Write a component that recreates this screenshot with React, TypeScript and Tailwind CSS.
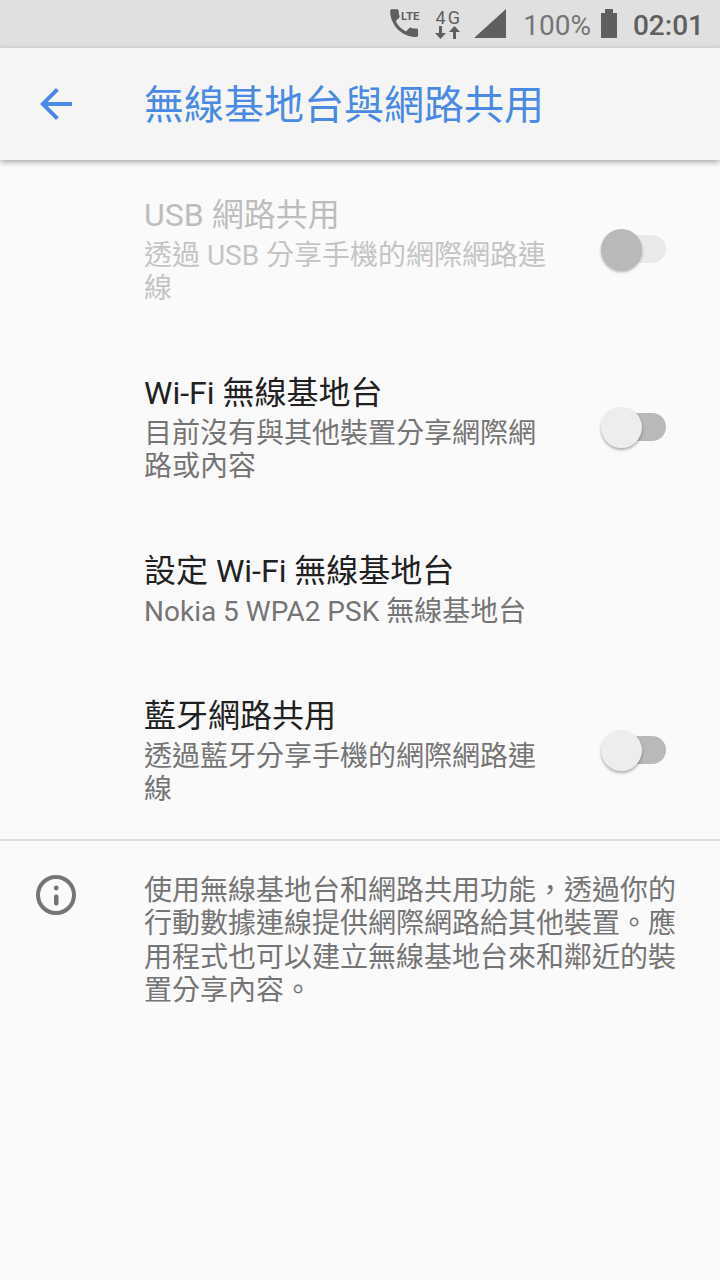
const font = "font-['Roboto','Noto_Sans_CJK_TC',sans-serif]";

const Toggle = ({ disabled }: { disabled?: boolean }) => (
  <div className="relative w-[65px] h-[41px] shrink-0 -mt-[3px]">
    <div className={`absolute right-0 top-[6px] w-[56px] h-[28px] rounded-full ${disabled ? "bg-[#e9e9e9]" : "bg-[#b9b9b9]"}`} />
    <div
      className={`absolute left-0 top-0 w-[41px] h-[41px] rounded-full shadow-[0_2px_3px_rgba(0,0,0,0.3)] ${disabled ? "bg-[#b9b9b9]" : "bg-[#ededed]"}`}
    />
  </div>
);

const Row = ({
  title,
  summary,
  toggle,
  disabled,
}: {
  title: string;
  summary: string;
  toggle?: boolean;
  disabled?: boolean;
}) => (
  <div className="flex items-center pl-[144px] pr-[54px] pt-[36px] pb-[33px]">
    <div className="flex-1 min-w-0 pr-[48px]">
      <div className={`text-[32px] leading-[38px] ${disabled ? "text-[#bdbdbd]" : "text-[#212121]"}`}>{title}</div>
      <div className={`text-[28px] leading-[33px] mt-[5px] ${disabled ? "text-[#c4c4c4]" : "text-[#757575]"}`}>{summary}</div>
    </div>
    {toggle && <Toggle disabled={disabled} />}
  </div>
);

const StatusBar = () => (
  <div className="h-[48px] bg-[#e0e0e0] flex items-center justify-end pr-[16px] text-[#616161]">
    <svg width="32" height="32" viewBox="0 0 32 32" className="mr-[15px] mt-[-2px]">
      <g transform="translate(-2.500 -2.500) scale(1.550)">
        <path
          d="M6.620 10.790c1.440 2.830 3.760 5.140 6.590 6.590l2.200-2.200c.27-.27.67-.36 1.020-.24 1.120.37 2.330.57 3.570.57.55 0 1 .45 1 1V20c0 .55-.45 1-1 1-9.390 0-17-7.610-17-17 0-.55.45-1 1-1h3.500c.55 0 1 .45 1 1 0 1.250.2 2.450.57 3.570.11.35.03.74-.25 1.020l-2.200 2.200z"
          fill="#5f5f5f"
        />
      </g>
      <text x="13" y="13" fontSize="11.500" fontWeight="700" fill="#5f5f5f" fontFamily="Roboto">LTE</text>
    </svg>
    <div className="w-[27px] mr-[12px] flex flex-col items-center">
      <span className="text-[18px] leading-[17px] tracking-[2px] text-[#5f5f5f]">4G</span>
      <svg width="27" height="13" viewBox="0 0 27 13">
        <path d="M4 0h3v7h4l-5.500 6L0 7h4zM21 13h-3V6h-4l5.500-6L25 6h-4z" fill="#5f5f5f" />
      </svg>
    </div>
    <svg width="32" height="29" viewBox="0 0 32 29" className="mr-[17px] mt-[-1px]">
      <path d="M32 0v29H0z" fill="#5f5f5f" />
    </svg>
    <span className="text-[28px] leading-none text-[#757575] mr-[10px] mt-[3px]">100%</span>
    <svg width="16" height="29" viewBox="0 0 16 29" className="mr-[16px] mt-[-1px]">
      <path d="M4 0h8v4h4v25H0V4h4z" fill="#5f5f5f" />
    </svg>
    <span className="text-[28px] leading-none font-medium text-[#5f5f5f] mt-[3px]">02:01</span>
  </div>
);

export default function App() {
  return (
    <div className={`${font} w-[720px] h-[1280px] overflow-hidden bg-[#fafafa] flex flex-col`}>
      <StatusBar />
      <header className="relative z-10 h-[112px] bg-[#f5f5f5] flex items-center shadow-[0_2px_6px_rgba(0,0,0,0.35)]">
        <svg width="48" height="48" viewBox="0 0 24 24" className="ml-[32px] mr-[64px] shrink-0">
          <path d="M20 11H7.830l5.590-5.590L12 4l-8 8 8 8 1.410-1.410L7.830 13H20v-2z" fill="#4a8ae5" />
        </svg>
        <h1 className="text-[40px] leading-none font-normal text-[#4a8ae5] mt-[4px]">無線基地台與網路共用</h1>
      </header>
      <Row title="USB 網路共用" summary="透過 USB 分享手機的網際網路連線" toggle disabled />
      <Row title="Wi-Fi 無線基地台" summary="目前沒有與其他裝置分享網際網路或內容" toggle />
      <Row title="設定 Wi-Fi 無線基地台" summary="Nokia 5 WPA2 PSK 無線基地台" />
      <Row title="藍牙網路共用" summary="透過藍牙分享手機的網際網路連線" toggle />
      <div className="h-[2px] bg-[#dedede]" />
      <div className="flex pt-[33px]">
        <svg width="48" height="48" viewBox="0 0 48 48" className="ml-[32px] mr-[64px] shrink-0 -mt-[3px]">
          <circle cx="24" cy="24" r="18" fill="none" stroke="#757575" strokeWidth="4" />
          <rect x="22" y="23.500" width="4.500" height="11" rx="2" fill="#757575" />
          <circle cx="24.200" cy="17" r="2.400" fill="#757575" />
        </svg>
        <p className="w-[540px] text-[28px] leading-[33.300px] text-[#757575]">
          使用無線基地台和網路共用功能，透過你的行動數據連線提供網際網路給其他裝置。應用程式也可以建立無線基地台來和鄰近的裝置分享內容。
        </p>
      </div>
    </div>
  );
}
